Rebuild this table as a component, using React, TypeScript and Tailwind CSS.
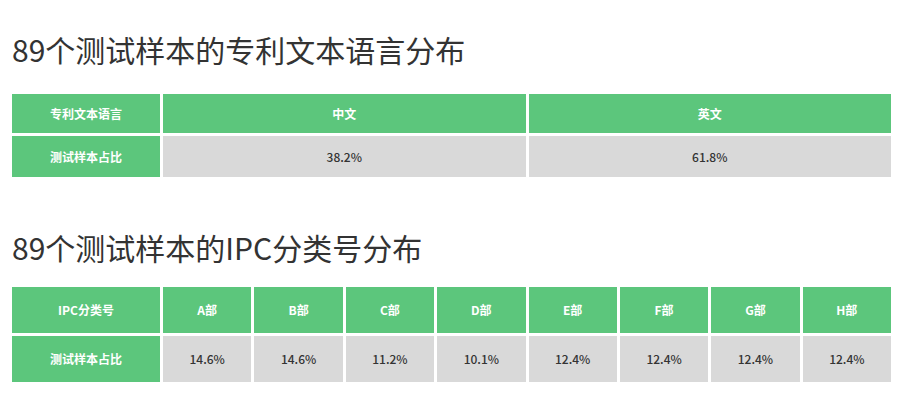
const font = { fontFamily: '"Noto Sans CJK SC", "Noto Sans", sans-serif' };

const ipcCols = [
  { label: "A部", value: "14.6%" },
  { label: "B部", value: "14.6%" },
  { label: "C部", value: "11.2%" },
  { label: "D部", value: "10.1%" },
  { label: "E部", value: "12.4%" },
  { label: "F部", value: "12.4%" },
  { label: "G部", value: "12.4%" },
  { label: "H部", value: "12.4%" },
];

function HeadCell({ children }: { children: React.ReactNode }) {
  return (
    <div className="flex items-center justify-center bg-[#5cc67c] text-[12px] font-bold text-white">
      {children}
    </div>
  );
}

function DataCell({ children }: { children: React.ReactNode }) {
  return (
    <div className="flex items-center justify-center bg-[#d9d9d9] text-[12px] font-medium text-[#333]">
      {children}
    </div>
  );
}

export default function App() {
  return (
    <div className="w-[904px] h-[400px] bg-white pl-[12px] pt-[34px]" style={font}>
      {/* language distribution */}
      <h1 className="text-[30px] leading-none text-[#333]">89个测试样本的专利文本语言分布</h1>
      <div className="mt-[30px] grid w-[879px] grid-cols-[148px_1fr_1fr] grid-rows-[39px_41px] gap-[3px] bg-white">
        <HeadCell>专利文本语言</HeadCell>
        <HeadCell>中文</HeadCell>
        <HeadCell>英文</HeadCell>
        <HeadCell>测试样本占比</HeadCell>
        <DataCell>38.2%</DataCell>
        <DataCell>61.8%</DataCell>
      </div>

      {/* IPC distribution */}
      <h2 className="mt-[55px] text-[30px] leading-none text-[#333]">89个测试样本的IPC分类号分布</h2>
      <div className="mt-[25px] grid w-[879px] grid-cols-[148px_repeat(8,1fr)] grid-rows-[46px_46px] gap-[3px] bg-white">
        <HeadCell>IPC分类号</HeadCell>
        {ipcCols.map((c) => (
          <HeadCell key={c.label}>{c.label}</HeadCell>
        ))}
        <HeadCell>测试样本占比</HeadCell>
        {ipcCols.map((c) => (
          <DataCell key={c.label}>{c.value}</DataCell>
        ))}
      </div>
    </div>
  );
}
